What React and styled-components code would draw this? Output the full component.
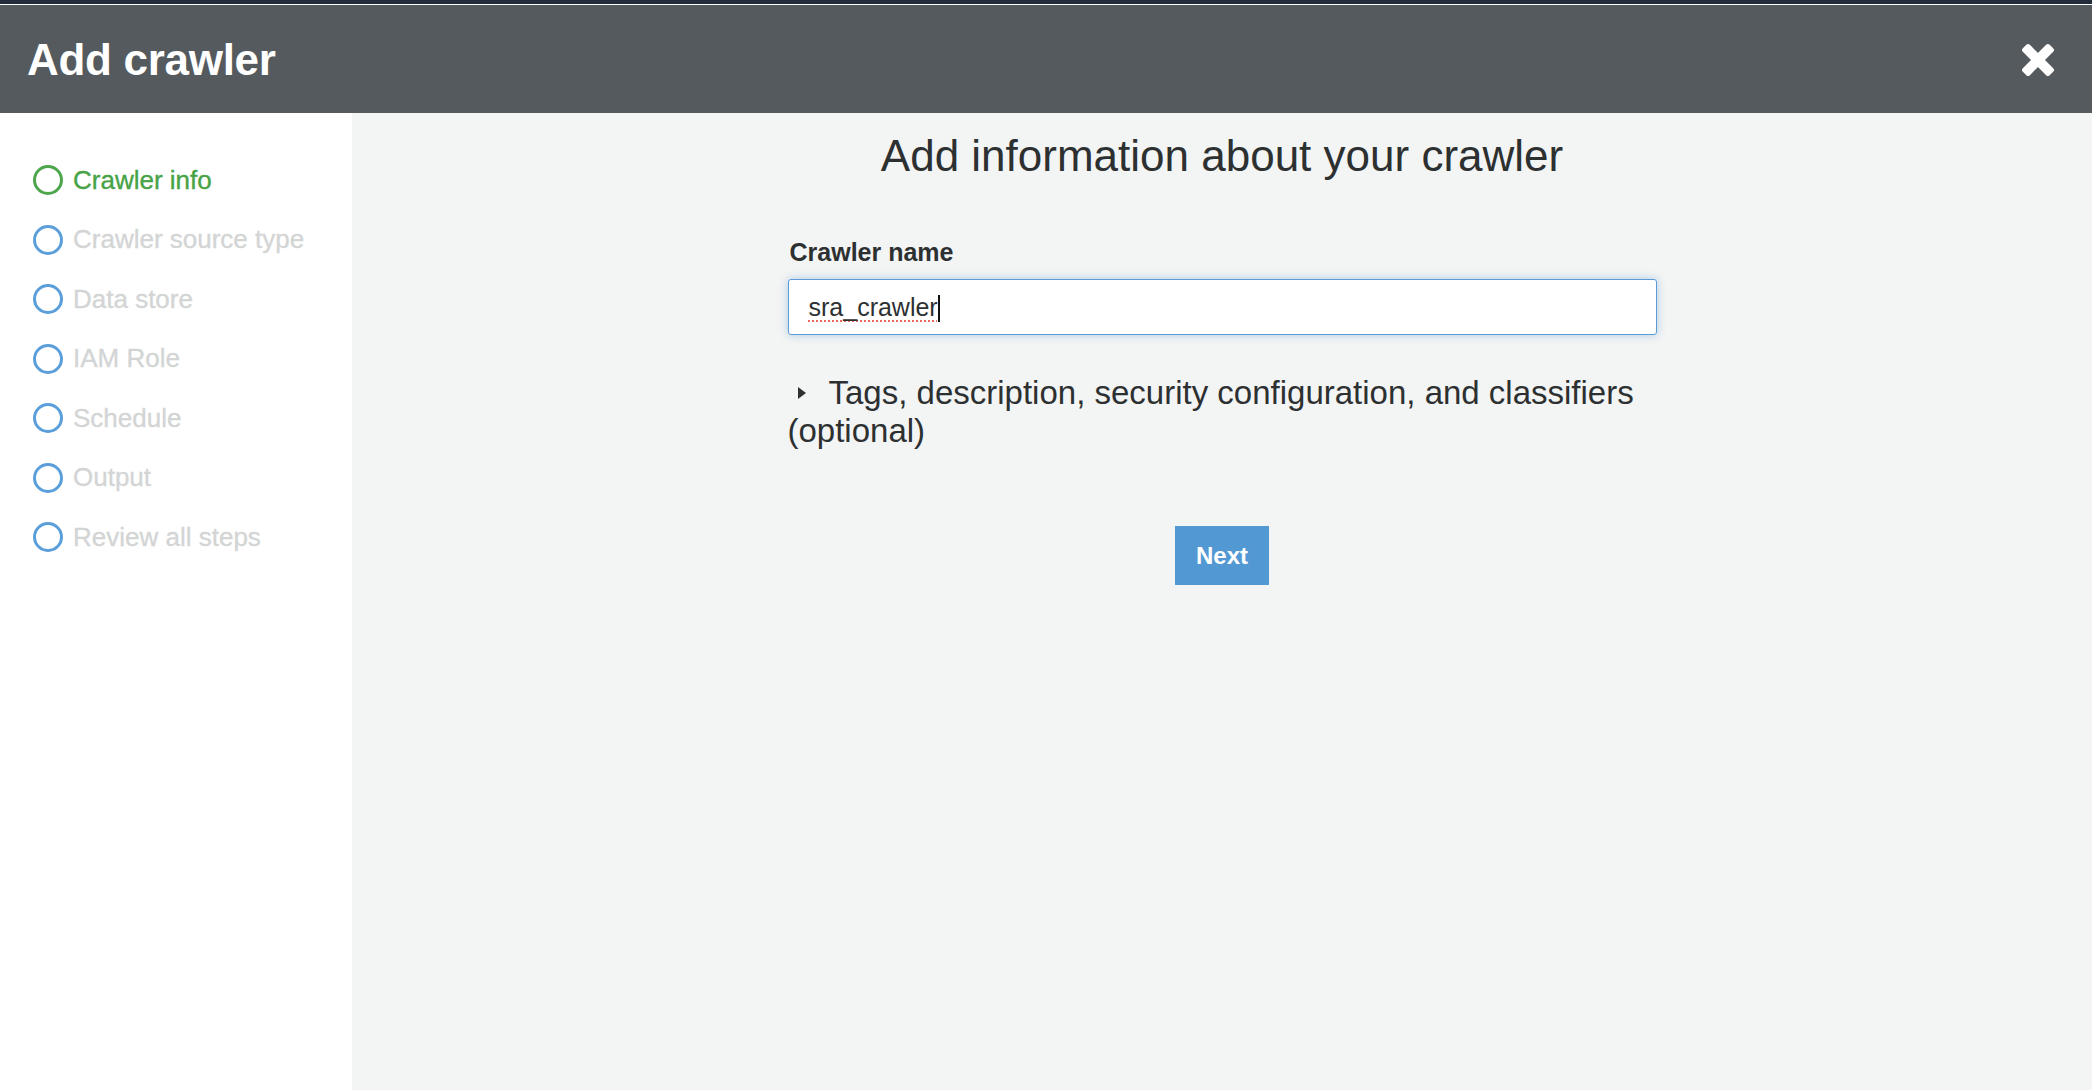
import React from 'react';
import styled, { createGlobalStyle } from 'styled-components';

const GlobalStyle = createGlobalStyle`
  html, body {
    margin: 0;
    height: 100%;
  }
  body {
    font-family: "Liberation Sans", Arial, sans-serif;
    color: #2f3233;
  }
  #root {
    height: 100%;
  }
`;

const steps = [
  'Crawler info',
  'Crawler source type',
  'Data store',
  'IAM Role',
  'Schedule',
  'Output',
  'Review all steps',
];

export default function App() {
  return (
    <>
      <GlobalStyle />
      <Page>
        <TopStrip />
        <Header>
          <Title>Add crawler</Title>
          <CloseButton aria-label='Close'>
            <svg width='34' height='34' viewBox='0 0 34 34'>
              <rect x='-2' y='12' width='38' height='10' rx='2.5' fill='#fff' transform='rotate(45 17 17)' />
              <rect x='-2' y='12' width='38' height='10' rx='2.5' fill='#fff' transform='rotate(-45 17 17)' />
            </svg>
          </CloseButton>
        </Header>

        <Body>
          <Sidebar>
            {steps.map((step, i) => (
              <Step key={step}>
                <StepCircle active={i === 0} />
                <StepLabel active={i === 0}>{step}</StepLabel>
              </Step>
            ))}
          </Sidebar>

          <Main>
            <Content>
              <Heading>Add information about your crawler</Heading>

              <Label>Crawler name</Label>
              <Field>
                <FieldText>sra_crawler</FieldText>
                <Caret />
              </Field>

              <Expander>
                <Arrow />
                Tags, description, security configuration, and classifiers (optional)
              </Expander>

              <Actions>
                <NextButton>Next</NextButton>
              </Actions>
            </Content>
          </Main>
        </Body>
      </Page>
    </>
  );
}

const Page = styled.div`
  display: flex;
  flex-direction: column;
  height: 100vh;
  overflow: hidden;
`;

const TopStrip = styled.div`
  height: 4px;
  background: #232c3b;
  border-bottom: 1px solid #ffffff;
  flex-shrink: 0;
`;

const Header = styled.header`
  height: 108px;
  flex-shrink: 0;
  background: #545a5d;
  display: flex;
  align-items: center;
  justify-content: space-between;
  padding: 2px 37px 0 27px;
  box-sizing: border-box;
`;

const Title = styled.h1`
  margin: 0;
  color: #ffffff;
  font: 700 44px "Liberation Sans", Arial, sans-serif;
  letter-spacing: -0.3px;
`;

const CloseButton = styled.button`
  background: none;
  border: none;
  padding: 0;
  width: 34px;
  height: 34px;
  cursor: pointer;
  display: flex;
`;

const Body = styled.div`
  flex: 1;
  display: flex;
  min-height: 0;
`;

const Sidebar = styled.nav`
  width: 352px;
  flex-shrink: 0;
  background: #ffffff;
  padding: 52px 0 0 33px;
  box-sizing: border-box;
  display: flex;
  flex-direction: column;
  gap: 29.5px;
`;

const Step = styled.div`
  display: flex;
  align-items: center;
  gap: 10px;
  height: 30px;
`;

const StepCircle = styled.span`
  width: 30px;
  height: 30px;
  box-sizing: border-box;
  border-radius: 50%;
  border: 3px solid ${p => (p.active ? '#4ea64c' : '#5a9fd9')};
  flex-shrink: 0;
`;

const StepLabel = styled.span`
  font-size: 26px;
  color: ${p => (p.active ? '#47a346' : '#d3d5d5')};
  -webkit-text-stroke: 0.35px currentColor;
  white-space: nowrap;
`;

const Main = styled.main`
  flex: 1;
  background: #f3f4f4;
  display: flex;
  justify-content: center;
`;

const Content = styled.div`
  width: 869px;
  display: flex;
  flex-direction: column;
`;

const Heading = styled.h2`
  margin: 17px 0 0;
  text-align: center;
  font-weight: 400;
  font-size: 44px;
  line-height: 52px;
  color: #2d3031;
  white-space: nowrap;
`;

const Label = styled.label`
  margin: 56px 0 0 2px;
  font-weight: 700;
  font-size: 25px;
  line-height: 28px;
  color: #2d3031;
`;

const Field = styled.div`
  margin-top: 13px;
  height: 56px;
  box-sizing: border-box;
  background: #ffffff;
  border: 1px solid #5d9bd6;
  border-radius: 3px;
  box-shadow: 0 0 8px rgba(82, 153, 211, 0.45);
  padding-left: 20px;
  display: flex;
  align-items: center;
`;

const FieldText = styled.span`
  font-size: 25px;
  color: #2d3031;
  text-decoration: underline dotted #ef6b61;
  text-decoration-thickness: 2px;
  text-underline-offset: 5px;
`;

const Caret = styled.span`
  width: 2px;
  height: 27px;
  background: #111;
  margin-top: 2px;
`;

const Expander = styled.div`
  margin-top: 39px;
  font-size: 33px;
  line-height: 38px;
  color: #2d3031;
  cursor: pointer;
`;

const Arrow = styled.span`
  display: inline-block;
  width: 0;
  height: 0;
  border-left: 8px solid #2d3031;
  border-top: 6px solid transparent;
  border-bottom: 6px solid transparent;
  margin: 0 23px 4px 10px;
  vertical-align: middle;
`;

const Actions = styled.div`
  margin-top: 76px;
  display: flex;
  justify-content: center;
`;

const NextButton = styled.button`
  width: 94px;
  height: 59px;
  border: none;
  background: #5299d3;
  color: #ffffff;
  font: 700 24px "Liberation Sans", Arial, sans-serif;
  cursor: pointer;
  padding: 0;
`;
